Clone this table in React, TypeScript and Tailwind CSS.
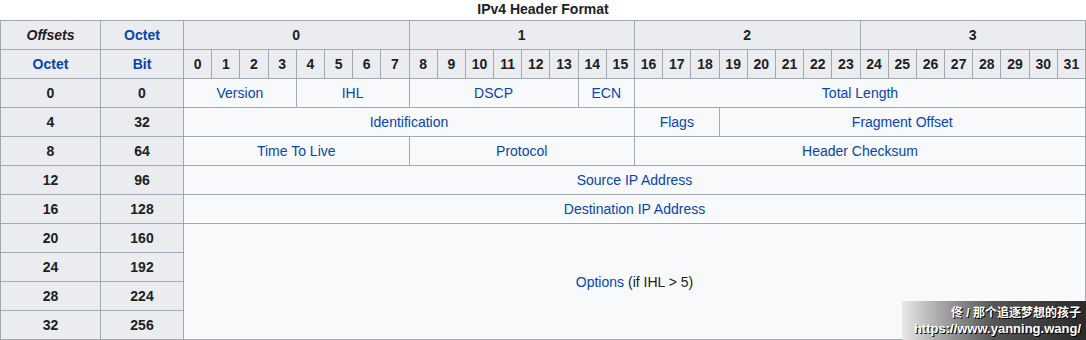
import React from "react";

const H = "bg-[#eaecf0] flex items-center justify-center font-bold text-[#202122]";
const D = "bg-[#f8f9fa] flex items-center justify-center text-[#0645ad]";

const rows: [number, number][] = [
  [0, 0],
  [4, 32],
  [8, 64],
  [12, 96],
  [16, 128],
  [20, 160],
  [24, 192],
  [28, 224],
  [32, 256],
];

export default function App() {
  return (
    <div className="relative w-[1086px] h-[340px] bg-white overflow-hidden text-[14px] leading-none" style={{ fontFamily: '"Liberation Sans", Arial, sans-serif' }}>
      <div className="h-[20px] flex items-center justify-center font-bold text-[#202122] text-[14px] pb-[2px]">
        IPv4 Header Format
      </div>
      <div className="grid grid-cols-[99px_82px_repeat(32,minmax(0,1fr))] grid-rows-[repeat(11,28px)] gap-px bg-[#a2a9b1] p-px">
        <div className={H + " italic"}>Offsets</div>
        <div className={H + " !text-[#0645ad]"}>Octet</div>
        <div className={H + " col-span-8"}>0</div>
        <div className={H + " col-span-8"}>1</div>
        <div className={H + " col-span-8"}>2</div>
        <div className={H + " col-span-8"}>3</div>

        <div className={H + " !text-[#0645ad]"}>Octet</div>
        <div className={H + " !text-[#0645ad]"}>Bit</div>
        {Array.from({ length: 32 }, (_, i) => (
          <div key={i} className={H}>{i}</div>
        ))}

        {rows.map(([o, b], idx) => (
          <React.Fragment key={o}>
            <div className={H} style={{ gridRow: idx + 3, gridColumn: 1 }}>{o}</div>
            <div className={H} style={{ gridRow: idx + 3, gridColumn: 2 }}>{b}</div>
          </React.Fragment>
        ))}

        <div className={D + " row-start-3 col-start-3 col-span-4"}>Version</div>
        <div className={D + " row-start-3 col-span-4"}>IHL</div>
        <div className={D + " row-start-3 col-span-6"}>DSCP</div>
        <div className={D + " row-start-3 col-span-2"}>ECN</div>
        <div className={D + " row-start-3 col-span-16"}>Total Length</div>

        <div className={D + " row-start-4 col-start-3 col-span-16"}>Identification</div>
        <div className={D + " row-start-4 col-span-3"}>Flags</div>
        <div className={D + " row-start-4 col-span-13"}>Fragment Offset</div>

        <div className={D + " row-start-5 col-start-3 col-span-8"}>Time To Live</div>
        <div className={D + " row-start-5 col-span-8"}>Protocol</div>
        <div className={D + " row-start-5 col-span-16"}>Header Checksum</div>

        <div className={D + " row-start-6 col-start-3 col-span-32"}>Source IP Address</div>
        <div className={D + " row-start-7 col-start-3 col-span-32"}>Destination IP Address</div>

        <div className={D + " row-start-8 col-start-3 col-span-32 row-span-4"}>
          <span>Options</span>
          <span className="text-[#202122] ml-[4px]">(if IHL &gt; 5)</span>
        </div>
      </div>

      <div
        className="absolute right-0 bottom-0 w-[184px] h-[39px] flex flex-col items-end justify-center pr-[5px] gap-[2px] bg-gradient-to-r from-[#e8e8e8] via-[#555555] via-50% to-[#2a2a2a] text-white font-bold"
        style={{ fontFamily: '"Liberation Sans", "Noto Sans CJK SC", sans-serif', textShadow: "1px 1px 0 #000" }}
      >
        <div className="text-[12px] leading-[14px]">佟 / 那个追逐梦想的孩子</div>
        <div className="text-[13px] leading-[14px]">https://www.yanning.wang/</div>
      </div>
    </div>
  );
}
